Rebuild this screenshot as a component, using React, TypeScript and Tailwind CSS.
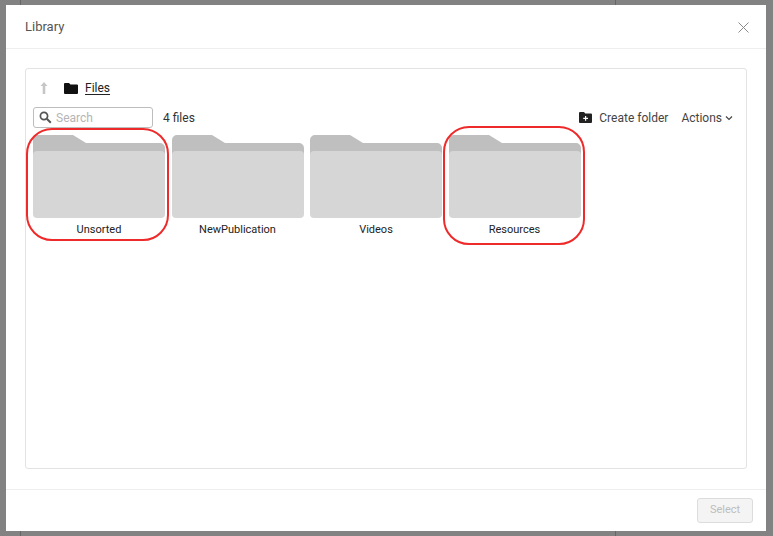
import React from "react";

function Folder() {
  return (
    <svg width="132" height="83" viewBox="0 0 132 83" className="block">
      <path d="M0 5a5 5 0 0 1 5-5h35l13 8h74a5 5 0 0 1 5 5v20H0z" fill="#bfbfbf" />
      <path d="M0 20a4 4 0 0 1 4-4h124a4 4 0 0 1 4 4v59a4 4 0 0 1-4 4H4a4 4 0 0 1-4-4z" fill="#d6d6d6" />
    </svg>
  );
}

function FolderItem({ name }: { name: string }) {
  return (
    <div className="flex w-[132px] flex-col items-center">
      <Folder />
      <div className="mt-[5px] text-[11px] leading-[14px] text-[#222]">{name}</div>
    </div>
  );
}

export default function App() {
  return (
    <div className="relative h-[536px] w-[773px] overflow-hidden bg-[#828282] pl-[6px] pt-[5px] font-['Roboto',sans-serif]">
      <div className="absolute left-[20px] top-0 h-full w-px bg-[#666]" />
      <div className="absolute left-[615px] top-0 h-full w-px bg-[#666]" />
      <div className="relative flex h-[526px] w-[760px] flex-col bg-white">
        <div className="flex h-[44px] shrink-0 items-center justify-between border-b border-[#eeeeee] pl-[19px] pr-[17px]">
          <span className="text-[13px] text-[#555]">Library</span>
          <svg width="11" height="11" viewBox="0 0 11 11" className="mt-[1px]">
            <path d="M.5.5l10 10M10.5.5l-10 10" stroke="#8a8a8a" strokeWidth="1" fill="none" />
          </svg>
        </div>
        <div className="flex-1 px-[19px] pb-[20px] pt-[19px]">
          <div className="h-[401px] w-[722px] rounded-[3px] border border-[#e3e3e3] pl-[7px] pr-[13px] pt-[9px]">
            <div className="flex h-[20px] items-center">
              <svg width="10" height="14" viewBox="0 0 10 14" className="ml-[6px]">
                <path d="M5 1 8.5 5H6.3v8H3.7V5H1.5z" fill="#c6c6c6" />
              </svg>
              <svg width="14" height="11" viewBox="0 0 14 11" className="ml-[15px]">
                <path d="M0 1a1 1 0 0 1 1-1h4l1.500 1.500H13a1 1 0 0 1 1 1V10a1 1 0 0 1-1 1H1a1 1 0 0 1-1-1z" fill="#111" />
              </svg>
              <span className="ml-[7px] text-[12px] text-[#222] underline underline-offset-2">Files</span>
            </div>
            <div className="mt-[9px] flex h-[21px] items-center">
              <div className="flex h-[21px] w-[120px] items-center rounded-[3px] border border-[#bdbdbd] pl-[5px]">
                <svg width="13" height="13" viewBox="0 0 13 13">
                  <circle cx="5" cy="5" r="3.600" stroke="#555" strokeWidth="1.700" fill="none" />
                  <path d="m7.800 7.800 4 4" stroke="#555" strokeWidth="2" />
                </svg>
                <span className="ml-[4px] text-[12px] text-[#b5b5b5]">Search</span>
              </div>
              <span className="ml-[10px] text-[12px] text-[#333]">4 files</span>
              <div className="ml-auto flex items-center">
                <svg width="13" height="11" viewBox="0 0 13 11">
                  <path fillRule="evenodd" d="M0 1a1 1 0 0 1 1-1h4l1.300 1.500H12a1 1 0 0 1 1 1V10a1 1 0 0 1-1 1H1a1 1 0 0 1-1-1zM6 4v1.800H4.200v1.200H6v1.800h1.200V7H9V5.800H7.200V4z" fill="#222" />
                </svg>
                <span className="ml-[7px] text-[12px] text-[#444]">Create folder</span>
                <span className="ml-[13px] text-[12px] text-[#444]">Actions</span>
                <svg width="8" height="6" viewBox="0 0 8 6" className="ml-[3px]">
                  <path d="M1 1.500 4 4.500 7 1.500" stroke="#444" strokeWidth="1.200" fill="none" />
                </svg>
              </div>
            </div>
            <div className="mt-[7px] flex gap-[6.5px]">
              <FolderItem name="Unsorted" />
              <FolderItem name="NewPublication" />
              <FolderItem name="Videos" />
              <FolderItem name="Resources" />
            </div>
          </div>
        </div>
        <div className="flex h-[42px] shrink-0 items-start justify-end border-t border-[#eeeeee] pr-[13px] pt-[8px]">
          <div className="flex h-[25px] w-[56px] items-center justify-center rounded-[3px] border border-[#dcdcdc] bg-[#f4f4f4] text-[11px] text-[#bdbdbd]">
            Select
          </div>
        </div>
      </div>
      <div className="absolute left-[26px] top-[128px] h-[113px] w-[143px] rounded-[26px] border-2 border-[#ee2a2a]" />
      <div className="absolute left-[443px] top-[126px] h-[119px] w-[142px] rounded-[26px] border-2 border-[#ee2a2a]" />
    </div>
  );
}
